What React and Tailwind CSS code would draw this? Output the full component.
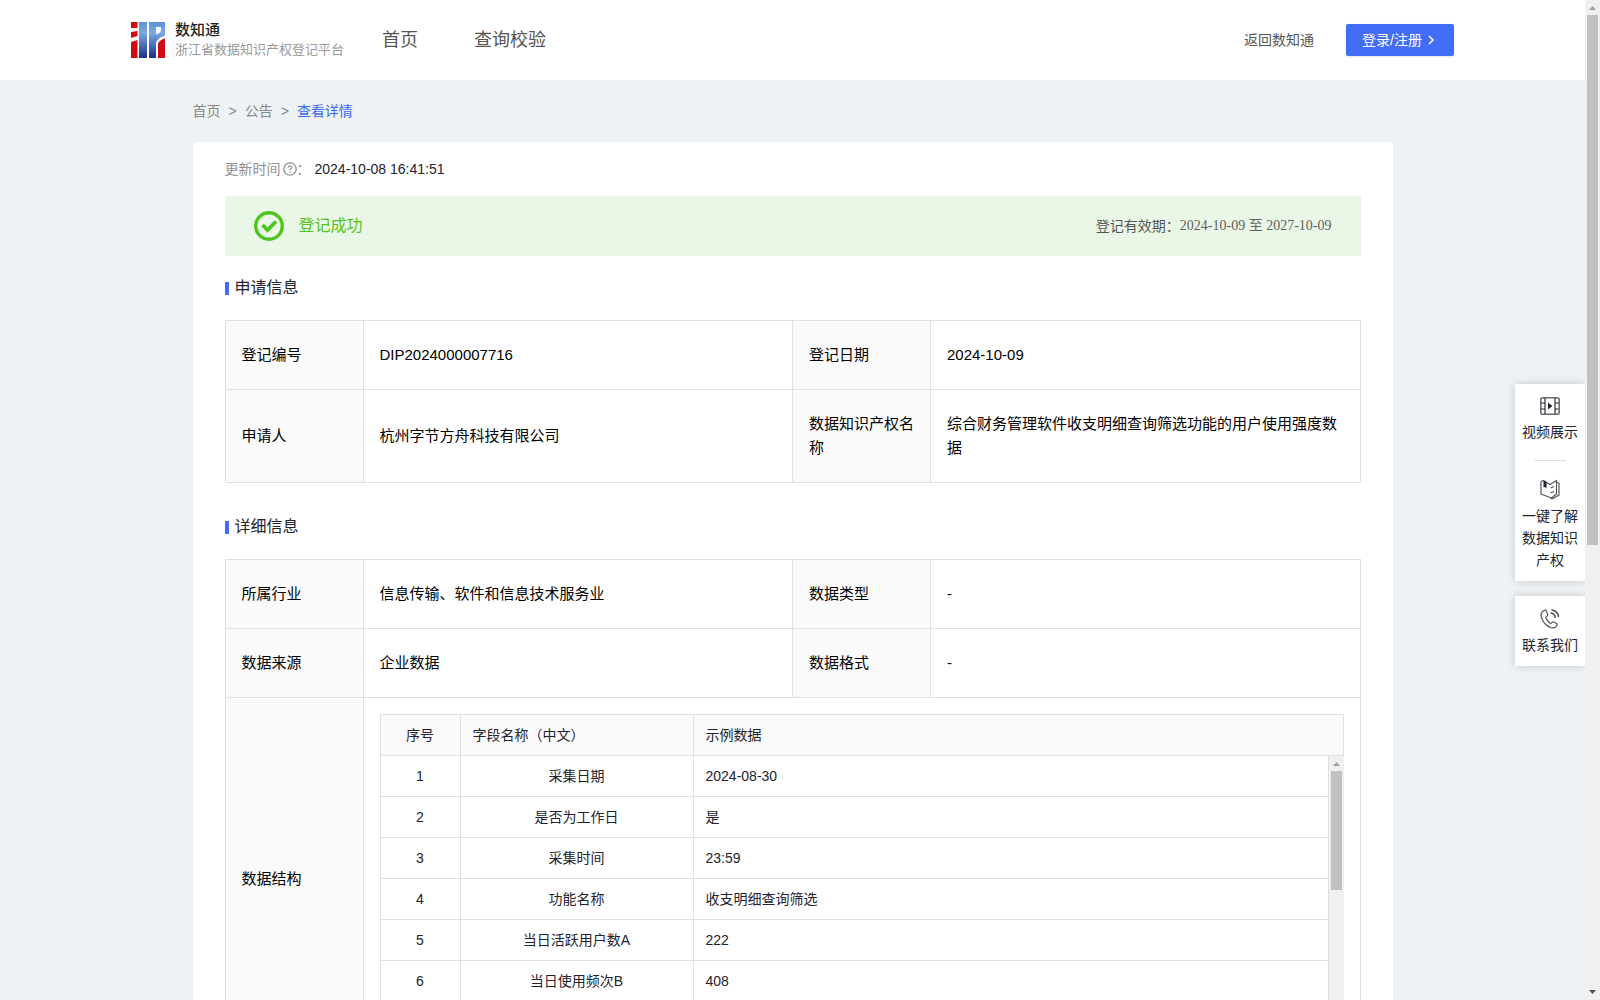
const applyRows = [
  ["登记编号", "DIP2024000007716", "登记日期", "2024-10-09"],
  [
    "申请人",
    "杭州字节方舟科技有限公司",
    "数据知识产权名称",
    "综合财务管理软件收支明细查询筛选功能的用户使用强度数据",
  ],
];

const detailRows = [
  ["所属行业", "信息传输、软件和信息技术服务业", "数据类型", "-"],
  ["数据来源", "企业数据", "数据格式", "-"],
];

const fields = [
  ["采集日期", "2024-08-30"],
  ["是否为工作日", "是"],
  ["采集时间", "23:59"],
  ["功能名称", "收支明细查询筛选"],
  ["当日活跃用户数A", "222"],
  ["当日使用频次B", "408"],
];

function Logo() {
  return (
    <svg width="34" height="36" viewBox="0 0 34 36" aria-hidden="true">
      <defs>
        <linearGradient id="logoBlue" gradientUnits="userSpaceOnUse" x1="0" y1="0" x2="0" y2="36">
          <stop offset="0" stopColor="#5c92d2" />
          <stop offset="0.3" stopColor="#7aaae0" />
          <stop offset="0.7" stopColor="#4065b0" />
          <stop offset="1" stopColor="#222f7c" />
        </linearGradient>
      </defs>
      <path d="M0 0h6.500v6H0z M0 10l6.500-1v5L0 16z M0 20l6.500-2v18H0z" fill="#cf0a12" />
      <path d="M8 0h8v36H8z" fill="url(#logoBlue)" />
      <path
        d="M18 0h16v13.500c-5 1.500-8 4-9 7.500v15h-7z M25 5v7.500c3-1 5-2.500 5-4.500V5z"
        fill="url(#logoBlue)"
        fillRule="evenodd"
      />
      <path d="M27 36V21.500c1-2.500 3.500-4 7-5V36z" fill="#cf0a12" />
    </svg>
  );
}

function VideoIcon() {
  return (
    <svg width="20" height="18" viewBox="0 0 20 18" fill="none" stroke="#6a6a74" aria-hidden="true">
      <rect x="0.8" y="0.8" width="18.4" height="16.4" rx="2" strokeWidth="1.6" />
      <path d="M1 6h4M1 12h4M15 6h4M15 12h4" strokeWidth="1.4" />
      <path d="M5 1v16M15 1v16" stroke="#2c2c36" strokeWidth="1.2" />
      <path d="M8 5.500l4.500 3.500L8 12.500z" fill="#26262f" stroke="none" />
    </svg>
  );
}

function BookIcon() {
  return (
    <svg width="20" height="21" viewBox="0 0 20 21" fill="none" stroke="#55555f" strokeLinejoin="round" aria-hidden="true">
      <path d="M1 2.500L3.500 1.500 10 5.500l6.500-4v13.500l-5 4L1 15z" strokeWidth="1.2" />
      <path d="M17 3.500l2 .5v12l-7 4-1.500-1" strokeWidth="1.2" />
      <path d="M10.500 9l3.500-1.500M10.500 14l3.500-1.500" strokeWidth="1.2" />
      <path d="M3.500 1.500l3 1.500v6.500L5 8 3.500 8.500z" fill="#26262f" stroke="none" />
    </svg>
  );
}

function PhoneIcon() {
  return (
    <svg width="20" height="20" viewBox="0 0 20 20" fill="none" stroke="#55555f" strokeWidth="1.2" strokeLinecap="round" aria-hidden="true">
      <path d="M4 1.500C1.500 3 .5 5.500 1.500 8.500c1.500 4.500 5 8.500 9 10 3 1 5.500 0 6.500-2 .5-1 0-1.500-.5-2l-2.500-1.500c-1-.5-1.500-.2-2 .5-.7 1-1.500 1-2.500.3C8 12.500 6.500 10.500 6 9c-.3-1 0-1.500 1-2 .8-.5 1-1 .6-2L6.500 2.200C6 1.200 5 1 4 1.500z" />
      <path d="M11 4c2.200.4 4 2.200 4.300 4.300M12 1c3.400.6 6 3.400 6.500 6.500" strokeWidth="1.6" />
    </svg>
  );
}

function Scrollbar({ thumb }) {
  return (
    <div className="flex w-[15px] shrink-0 flex-col items-center bg-[#f0f0f0]" aria-hidden="true">
      <svg width="15" height="15" viewBox="0 0 15 15">
        <path d="M4 10h7L7.500 6z" fill="#a0a0a0" />
      </svg>
      <div className={`w-[11px] bg-[#c1c1c1] ${thumb}`} />
      <svg className="mt-auto" width="15" height="15" viewBox="0 0 15 15">
        <path d="M4 5h7L7.500 9z" fill="#505050" />
      </svg>
    </div>
  );
}

function SectionTitle({ children }) {
  return (
    <h2 className="flex h-8 items-center gap-1.5 text-base text-[#23232e]">
      <span className="h-[13px] w-1 bg-[#426cf5]" />
      {children}
    </h2>
  );
}

function InfoTable({ rows, children }) {
  return (
    <table className="w-full table-fixed border-collapse text-[15px] leading-6 text-black">
      <colgroup>
        <col className="w-[138px]" />
        <col />
        <col className="w-[138px]" />
        <col />
      </colgroup>
      <tbody>
        {rows.map(([labelA, valueA, labelB, valueB]) => (
          <tr key={labelA}>
            <LabelCell>{labelA}</LabelCell>
            <td className="border border-[#e0e0e0] px-4 py-[22px]">{valueA}</td>
            <LabelCell>{labelB}</LabelCell>
            <td className="border border-[#e0e0e0] px-4 py-[22px]">{valueB}</td>
          </tr>
        ))}
        {children}
      </tbody>
    </table>
  );
}

function LabelCell({ children }) {
  return (
    <th scope="row" className="border border-[#e0e0e0] bg-[#fafafa] px-4 py-[22px] text-left font-normal">
      {children}
    </th>
  );
}

function FieldTable() {
  return (
    <div className="text-sm text-[#23232e]">
      <div className="flex h-[42px] border border-[#e0e0e0] bg-[#fafafa]">
        <div className="flex w-20 shrink-0 items-center justify-center border-r border-[#e0e0e0]">序号</div>
        <div className="flex w-[233px] shrink-0 items-center border-r border-[#e0e0e0] px-3">字段名称（中文）</div>
        <div className="flex flex-1 items-center px-3">示例数据</div>
      </div>
      <div className="flex h-[288px] overflow-hidden">
        <div className="flex-1">
          <table className="w-full table-fixed border-separate border-spacing-0 leading-5" aria-label="数据结构">
            <colgroup>
              <col className="w-[81px]" />
              <col className="w-[233px]" />
              <col />
            </colgroup>
            <tbody>
              {fields.map(([name, sample], i) => (
                <tr key={name} className="h-[41px]">
                  <td className="border-x border-b border-[#e0e0e0] text-center">{i + 1}</td>
                  <td className="border-r border-b border-[#e0e0e0] text-center">{name}</td>
                  <td className="border-r border-b border-[#e0e0e0] px-3">{sample}</td>
                </tr>
              ))}
            </tbody>
          </table>
        </div>
        <Scrollbar thumb="h-[119px]" />
      </div>
    </div>
  );
}

function Header() {
  return (
    <header className="h-20 bg-white">
      <div className="mx-auto flex h-full max-w-[1323px] items-center">
        <a href="#" className="flex items-center gap-2.5">
          <Logo />
          <span className="flex flex-col">
            <span className="text-[15px] leading-5 font-medium text-[#222222]">数知通</span>
            <span className="text-[13px] leading-5 text-[#999999]">浙江省数据知识产权登记平台</span>
          </span>
        </a>
        <nav className="ml-[38px] flex gap-14 text-lg text-[#555555]">
          <a href="#">首页</a>
          <a href="#">查询校验</a>
        </nav>
        <a href="#" className="ml-auto text-sm text-[#555555]">返回数知通</a>
        <button
          type="button"
          className="ml-8 flex h-8 w-[108px] items-center gap-1 rounded-xs bg-[#446df6] pl-4 text-sm text-white shadow-sm"
        >
          登录/注册
          <svg width="12" height="12" viewBox="0 0 12 12" fill="none" stroke="currentColor" strokeWidth="1.500" aria-hidden="true">
            <path d="M3 2l4 4-4 4" />
          </svg>
        </button>
      </div>
    </header>
  );
}

function SideTools() {
  return (
    <aside className="absolute top-96 right-0 flex w-[70px] flex-col gap-[15px] text-sm leading-[22px] text-[#23232e]">
      <div className="flex flex-col items-center bg-white px-[7px] pt-[13px] pb-2.5 shadow-[0_0_8px_rgba(0,0,0,0.18)]">
        <a href="#" className="flex flex-col items-center gap-1.5 text-center">
          <VideoIcon />
          视频展示
        </a>
        <span className="mt-[17px] mb-[18px] h-px w-8 bg-[#dddddd]" />
        <a href="#" className="flex flex-col items-center gap-[5px] text-center">
          <BookIcon />
          一键了解数据知识产权
        </a>
      </div>
      <a
        href="#"
        className="flex flex-col items-center gap-[5px] bg-white px-[7px] pt-[13px] pb-2.5 shadow-[0_0_8px_rgba(0,0,0,0.18)]"
      >
        <PhoneIcon />
        联系我们
      </a>
    </aside>
  );
}

export default function App() {
  return (
    <div className="flex h-screen overflow-hidden bg-[#eef2f5] font-['Liberation_Sans','Noto_Sans_CJK_SC',sans-serif]">
      <div className="relative min-w-0 flex-1 overflow-hidden">
        <Header />

        <main className="mx-auto max-w-[1200px]">
          <nav className="flex h-[62px] items-center gap-2 text-sm text-[#888888]" aria-label="breadcrumb">
            <a href="#">首页</a>
            <span>&gt;</span>
            <a href="#">公告</a>
            <span>&gt;</span>
            <a href="#" className="text-[#3a69f5]">查看详情</a>
          </nav>

          <div className="rounded-sm bg-white px-8 pb-8">
            <div className="flex h-[54px] items-center text-sm text-[#909096]">
              更新时间
              <svg className="ml-0.5" width="14" height="14" viewBox="0 0 14 14" fill="none" stroke="currentColor" aria-hidden="true">
                <circle cx="7" cy="7" r="6.200" strokeWidth="1.300" />
                <path d="M5.200 5.600C5.300 3.300 8.900 3.500 8.800 5.500 8.700 6.800 7 6.800 7 8.300" strokeWidth="1.200" />
                <path d="M7 9.400v1.300" strokeWidth="1.300" />
              </svg>
              ：
              <span className="ml-1 text-[#23232e]">2024-10-08 16:41:51</span>
            </div>

            <div className="flex h-[60px] items-center bg-[#ebf7e6] px-[29px]">
              <svg width="30" height="30" viewBox="0 0 30 30" fill="none" stroke="#4cc61e" aria-hidden="true">
                <circle cx="15" cy="15" r="13.300" strokeWidth="3.400" />
                <path d="M8.500 14l5 5 8.500-8.500" strokeWidth="3.800" />
              </svg>
              <span className="ml-[15px] text-base text-[#52c41a]">登记成功</span>
              <span className="ml-auto text-sm text-[#555555]">登记有效期：</span>
              <span className="font-['Liberation_Serif','Noto_Sans_CJK_SC',serif] text-sm text-[#606060]">
                2024-10-09 至 2027-10-09
              </span>
            </div>

            <section className="pt-4">
              <SectionTitle>申请信息</SectionTitle>
              <div className="mt-4">
                <InfoTable rows={applyRows} />
              </div>
            </section>

            <section className="pt-7">
              <SectionTitle>详细信息</SectionTitle>
              <div className="mt-4">
                <InfoTable rows={detailRows}>
                  <tr>
                    <LabelCell>数据结构</LabelCell>
                    <td colSpan={3} className="border border-[#e0e0e0] p-4">
                      <FieldTable />
                    </td>
                  </tr>
                </InfoTable>
              </div>
            </section>
          </div>
        </main>

        <SideTools />
      </div>
      <Scrollbar thumb="h-[530px]" />
    </div>
  );
}
